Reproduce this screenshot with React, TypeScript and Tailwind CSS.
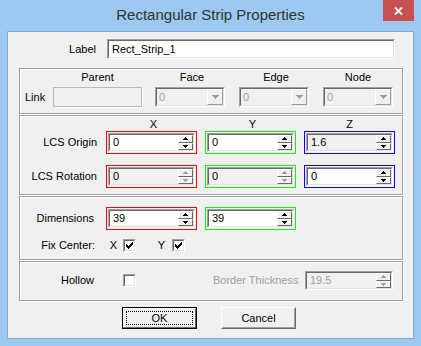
import React from "react";

// tiny pixel arrows for spin buttons and combos
const UpArrow = ({ color }: { color: string }) => (
  <svg width="5" height="3" viewBox="0 0 5 3" shapeRendering="crispEdges">
    <path d="M2 0h1v1h-1z M1 1h3v1h-3z M0 2h5v1h-5z" fill={color} />
  </svg>
);

const DownArrow = ({ color }: { color: string }) => (
  <svg width="5" height="3" viewBox="0 0 5 3" shapeRendering="crispEdges">
    <path d="M0 0h5v1h-5z M1 1h3v1h-3z M2 2h1v1h-1z" fill={color} />
  </svg>
);

const ComboArrow = ({ color }: { color: string }) => (
  <svg width="7" height="4" viewBox="0 0 7 4" shapeRendering="crispEdges">
    <path d="M0 0h7v1h-7z M1 1h5v1h-5z M2 2h3v1h-3z M3 3h1v1h-1z" fill={color} />
  </svg>
);

const CheckMark = () => (
  <svg width="7" height="7" viewBox="0 0 7 7" shapeRendering="crispEdges">
    <path
      d="M6 0h1v3h-1z M5 1h1v3h-1z M4 2h1v3h-1z M3 3h1v3h-1z M2 4h1v3h-1z M1 3h1v3h-1z M0 2h1v3h-1z"
      fill="#000"
    />
  </svg>
);

function Sunken({
  className = "",
  inner = "",
  children,
}: {
  className?: string;
  inner?: string;
  children?: React.ReactNode;
}) {
  return (
    <div
      className={`border border-t-[#a0a0a0] border-l-[#a0a0a0] border-b-white border-r-white ${className}`}>
      <div
        className={`h-full w-full border border-t-[#696969] border-l-[#696969] border-b-[#e3e3e3] border-r-[#e3e3e3] ${inner}`}>
        {children}
      </div>
    </div>
  );
}

function SpinBtn({ up, disabled }: { up?: boolean; disabled?: boolean }) {
  const c = disabled ? "#a0a0a0" : "#000";
  return (
    <div className="flex-1 flex items-center justify-center bg-[#f0f0f0] border border-t-white border-l-white border-b-[#696969] border-r-[#696969]">
      {up ? <UpArrow color={c} /> : <DownArrow color={c} />}
    </div>
  );
}

function SpinEdit({
  value,
  w,
  h,
  gray,
  dimText,
  dimArrows,
}: {
  value: string;
  w: string;
  h: string;
  gray?: boolean;
  dimText?: boolean;
  dimArrows?: boolean;
}) {
  return (
    <Sunken
      className={`${w} ${h}`}
      inner={`flex ${gray ? "bg-[#f0f0f0]" : "bg-white"}`}>
      <span
        className={`flex-1 pl-[3px] flex items-center ${
          dimText ? "text-[#a0a0a0]" : "text-black"
        }`}>
        {value}
      </span>
      <div className="w-[15px] flex flex-col">
        <SpinBtn up disabled={dimArrows} />
        <SpinBtn disabled={dimArrows} />
      </div>
    </Sunken>
  );
}

function Framed({
  color,
  children,
}: {
  color: string;
  children: React.ReactNode;
}) {
  return <div className={`w-[91px] h-[23px] border p-px ${color}`}>{children}</div>;
}

function Combo() {
  return (
    <Sunken className="w-[70px] h-[20px]" inner="flex bg-[#f0f0f0]">
      <span className="flex-1 pl-[2px] flex items-center text-[#a0a0a0]">0</span>
      <div className="w-[16px] flex items-center justify-center border border-t-white border-l-white border-b-[#a0a0a0] border-r-[#a0a0a0] bg-[#f0f0f0]">
        <ComboArrow color="#a0a0a0" />
      </div>
    </Sunken>
  );
}

function Check({ checked }: { checked?: boolean }) {
  return (
    <Sunken className="w-[13px] h-[13px]" inner="bg-white flex items-center justify-center">
      {checked && <CheckMark />}
    </Sunken>
  );
}

function Group({ h, children }: { h: string; children: React.ReactNode }) {
  return (
    <div
      className={`ml-[11px] mt-px w-[384px] ${h} border border-[#a0a0a0] shadow-[inset_1px_1px_0_#fff,1px_1px_0_#fff] flex flex-col`}>
      {children}
    </div>
  );
}

export default function App() {
  return (
    <div className="w-[421px] h-[346px] bg-[#9bc9ef] flex flex-col font-['Liberation_Sans',Arial,sans-serif] text-[11px] text-black">
      {/* Title bar */}
      <div className="relative h-[31px] flex items-center justify-center">
        <span className="text-[15px] text-[#333] -mt-px">Rectangular Strip Properties</span>
        <div className="absolute right-[7px] top-0 w-[31px] h-[21px] bg-[#c75050] flex items-center justify-center">
          <svg width="9" height="8" viewBox="0 0 9 8">
            <path d="M1 0.5 L8 7.5 M8 0.5 L1 7.5" stroke="#fff" strokeWidth="1.8" />
          </svg>
        </div>
      </div>

      {/* Client area */}
      <div className="mx-[7px] h-[308px] border border-[#86acd0] bg-[#f0f0f0] flex flex-col">
        <div className="mt-[7px] flex items-center h-[20px]">
          <span className="w-[88px] text-right">Label</span>
          <Sunken className="ml-[11px] w-[288px] h-[20px]" inner="bg-white flex items-center pl-[3px]">
            Rect_Strip_1
          </Sunken>
        </div>

        {/* Link */}
        <div className="mt-[8px]">
          <Group h="h-[46px]">
            <div className="mt-[2px] flex h-[13px] leading-[13px]">
              <span className="w-[33px]" />
              <span className="w-[89px] text-center">Parent</span>
              <span className="ml-[13px] w-[70px] text-center pl-[4px]">Face</span>
              <span className="ml-[14px] w-[70px] text-center pl-[4px]">Edge</span>
              <span className="ml-[14px] w-[70px] text-center">Node</span>
            </div>
            <div className="mt-[3px] flex items-center">
              <span className="w-[33px] pl-[5px]">Link</span>
              <div className="w-[89px] h-[20px] border border-[#b9b9b9] bg-[#f0f0f0] shadow-[1px_1px_0_#fff]" />
              <div className="ml-[13px]">
                <Combo />
              </div>
              <div className="ml-[14px]">
                <Combo />
              </div>
              <div className="ml-[14px]">
                <Combo />
              </div>
            </div>
          </Group>
        </div>

        {/* LCS */}
        <Group h="h-[80px]">
          <div className="mt-[2px] flex h-[13px] leading-[13px]">
            <span className="w-[86px]" />
            <span className="w-[91px] text-center pl-[4px]">X</span>
            <span className="ml-[8px] w-[91px] text-center pl-[4px]">Y</span>
            <span className="ml-[8px] w-[91px] text-center">Z</span>
          </div>
          <div className="flex items-center">
            <span className="w-[77px] text-right">LCS Origin</span>
            <div className="ml-[9px] flex gap-[8px]">
              <Framed color="border-[#ff0000]">
                <SpinEdit value="0" w="w-full" h="h-full" />
              </Framed>
              <Framed color="border-[#00ff00]">
                <SpinEdit value="0" w="w-full" h="h-full" />
              </Framed>
              <Framed color="border-[#0000ff]">
                <SpinEdit value="1.6" w="w-full" h="h-full" gray />
              </Framed>
            </div>
          </div>
          <div className="mt-[11px] flex items-center">
            <span className="w-[77px] text-right">LCS Rotation</span>
            <div className="ml-[9px] flex gap-[8px]">
              <Framed color="border-[#ff0000]">
                <SpinEdit value="0" w="w-full" h="h-full" gray dimArrows />
              </Framed>
              <Framed color="border-[#00ff00]">
                <SpinEdit value="0" w="w-full" h="h-full" gray dimArrows />
              </Framed>
              <Framed color="border-[#0000ff]">
                <SpinEdit value="0" w="w-full" h="h-full" />
              </Framed>
            </div>
          </div>
        </Group>

        {/* Dimensions */}
        <Group h="h-[64px]">
          <div className="mt-[10px] flex items-center">
            <span className="w-[77px] text-right pr-[3px]">Dimensions</span>
            <div className="ml-[9px] flex gap-[8px]">
              <Framed color="border-[#ff0000]">
                <SpinEdit value="39" w="w-full" h="h-full" />
              </Framed>
              <Framed color="border-[#00ff00]">
                <SpinEdit value="39" w="w-full" h="h-full" />
              </Framed>
            </div>
          </div>
          <div className="mt-[9px] flex items-center h-[13px]">
            <span className="w-[77px] text-right pr-[2px]">Fix Center:</span>
            <span className="w-[26px] text-right pr-[6px]">X</span>
            <Check checked />
            <span className="w-[36px] text-right pr-[7px]">Y</span>
            <Check checked />
          </div>
        </Group>

        {/* Hollow */}
        <Group h="h-[40px]">
          <div className="mt-[9px] flex items-center h-[19px]">
            <span className="w-[77px] text-right pr-[3px]">Hollow</span>
            <div className="ml-[26px]">
              <Check />
            </div>
            <span className="ml-[77px] w-[92px] text-[#a0a0a0]">Border Thickness</span>
            <SpinEdit value="19.5" w="w-[88px]" h="h-[19px]" gray dimText dimArrows />
          </div>
        </Group>

        {/* Buttons */}
        <div className="mt-[6px] ml-[114px] flex gap-[24px]">
          <div className="w-[75px] h-[22px] border border-black">
            <div className="h-full w-full border border-t-white border-l-white border-b-[#696969] border-r-[#696969] bg-[#f0f0f0] p-[2px]">
              <div className="h-full w-full border border-dotted border-black flex items-center justify-center">
                OK
              </div>
            </div>
          </div>
          <div className="w-[75px] h-[22px] border border-t-white border-l-white border-b-[#696969] border-r-[#696969]">
            <div className="h-full w-full border border-t-[#f0f0f0] border-l-[#f0f0f0] border-b-[#a0a0a0] border-r-[#a0a0a0] bg-[#f0f0f0] flex items-center justify-center">
              Cancel
            </div>
          </div>
        </div>
      </div>
    </div>
  );
}
